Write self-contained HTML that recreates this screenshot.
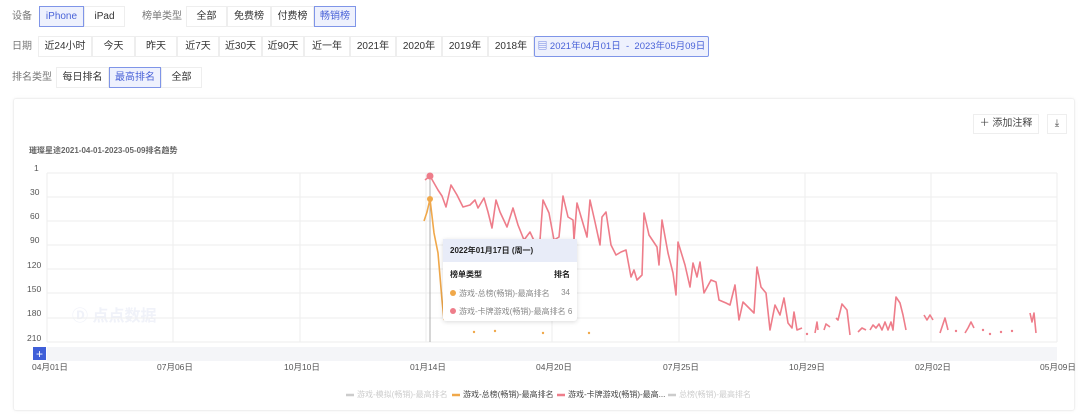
<!DOCTYPE html>
<html><head><meta charset="utf-8"><style>
*{margin:0;padding:0;box-sizing:border-box}
body{width:1080px;height:416px;background:#fff;font-family:"Liberation Sans","Noto Sans CJK SC",sans-serif;font-size:10px;color:#333;position:relative;overflow:hidden}
.l{position:absolute;color:#777;font-size:10px;line-height:12px}
.b{position:absolute;height:21px;border:1px solid #eee;background:#fff;text-align:center;line-height:19px;font-size:10px;color:#333;white-space:nowrap;overflow:hidden}
.a{border-color:#7f95e8;background:#eef1fd;color:#4a63d8;z-index:2}
.ax{position:absolute;font-size:8.5px;color:#555;line-height:10px;white-space:nowrap}
</style></head><body>
<div class="l" style="left:12px;top:11px">设备</div>
<div class="b a" style="left:39px;top:6px;width:45px">iPhone</div>
<div class="b" style="left:84px;top:6px;width:41px">iPad</div>
<div class="l" style="left:142px;top:11px">榜单类型</div>
<div class="b" style="left:186px;top:6px;width:41px">全部</div>
<div class="b" style="left:227px;top:6px;width:44px">免费榜</div>
<div class="b" style="left:271px;top:6px;width:43px">付费榜</div>
<div class="b a" style="left:314px;top:6px;width:42px">畅销榜</div>

<div class="l" style="left:12px;top:41px">日期</div>
<div class="b" style="left:38px;top:36px;width:54px">近24小时</div>
<div class="b" style="left:92px;top:36px;width:43px">今天</div>
<div class="b" style="left:135px;top:36px;width:42px">昨天</div>
<div class="b" style="left:177px;top:36px;width:42px">近7天</div>
<div class="b" style="left:219px;top:36px;width:43px">近30天</div>
<div class="b" style="left:262px;top:36px;width:42px">近90天</div>
<div class="b" style="left:304px;top:36px;width:46px">近一年</div>
<div class="b" style="left:350px;top:36px;width:46px">2021年</div>
<div class="b" style="left:396px;top:36px;width:46px">2020年</div>
<div class="b" style="left:442px;top:36px;width:46px">2019年</div>
<div class="b" style="left:488px;top:36px;width:46px">2018年</div>
<div class="b a" style="left:534px;top:36px;width:175px;border-radius:2px;font-size:9.5px">&#9636; 2021年04月01日 &nbsp;- &nbsp;2023年05月09日</div>

<div class="l" style="left:12px;top:72px">排名类型</div>
<div class="b" style="left:56px;top:67px;width:53px">每日排名</div>
<div class="b a" style="left:109px;top:67px;width:52px">最高排名</div>
<div class="b" style="left:161px;top:67px;width:41px">全部</div>

<div style="position:absolute;left:13px;top:98px;width:1062px;height:313px;border:1px solid #f0f0f0;border-radius:3px;box-shadow:0 0 3px rgba(0,0,0,.05)"></div>
<div class="b" style="left:973px;top:114px;width:66px;height:20px;line-height:18px;color:#444">＋ 添加注释</div>
<div class="b" style="left:1047px;top:114px;width:20px;height:20px;line-height:18px;color:#444">⤓</div>
<div style="position:absolute;left:29px;top:145px;font-size:8px;color:#666;font-weight:bold">璀璨星途2021-04-01-2023-05-09排名趋势</div>

<div class="ax" style="left:34px;top:163px">1</div>
<div class="ax" style="left:30px;top:187px">30</div>
<div class="ax" style="left:30px;top:211px">60</div>
<div class="ax" style="left:30px;top:235px">90</div>
<div class="ax" style="left:27px;top:260px">120</div>
<div class="ax" style="left:27px;top:284px">150</div>
<div class="ax" style="left:27px;top:308px">180</div>
<div class="ax" style="left:27px;top:333px">210</div>

<div style="position:absolute;left:72px;top:302px;font-size:16px;font-weight:bold;color:#f0f2f9">Ⓓ 点点数据</div>

<svg style="position:absolute;left:0;top:0" width="1080" height="416">
<g stroke="#eeeeee" stroke-width="1">
<line x1="47" y1="173" x2="1057" y2="173"/><line x1="47" y1="197" x2="1057" y2="197"/>
<line x1="47" y1="221" x2="1057" y2="221"/><line x1="47" y1="245" x2="1057" y2="245"/>
<line x1="47" y1="269" x2="1057" y2="269"/><line x1="47" y1="293" x2="1057" y2="293"/>
<line x1="47" y1="318" x2="1057" y2="318"/><line x1="47" y1="342" x2="1057" y2="342"/>
<line x1="47" y1="173" x2="47" y2="342"/><line x1="173" y1="173" x2="173" y2="342"/>
<line x1="300" y1="173" x2="300" y2="342"/><line x1="426" y1="173" x2="426" y2="342"/>
<line x1="552" y1="173" x2="552" y2="342"/><line x1="679" y1="173" x2="679" y2="342"/>
<line x1="805" y1="173" x2="805" y2="342"/><line x1="931" y1="173" x2="931" y2="342"/>
<line x1="1057" y1="173" x2="1057" y2="342"/>
</g>
<rect x="47" y="347" width="1010" height="14" fill="#f4f5f8"/>
<rect x="33" y="347" width="13" height="13" fill="#3f5fd8"/>
<text x="39.5" y="358" fill="#fff" font-size="12" text-anchor="middle" font-family="Liberation Sans">+</text>
<line x1="430" y1="176" x2="430" y2="342" stroke="#999" stroke-width="0.8"/>
<g fill="none" stroke="#ee7d8a" stroke-width="1.6" stroke-linejoin="round">
<polyline points="425,180 430,176 438,190 442,196 446,207 451,185 457,195 463,207 470,205 475,200 478,208 484,198 488,212 492,228 496,200 500,212 507,227 513,208 518,225 524,240 530,232 536,245 540,240 543,200 549,213 554,240 559,237 563,196 568,217 573,220 574,240 577,203 582,220 587,237 590,200 595,222 600,245 602,217 606,212 611,245 616,255 621,252 626,250 631,277 634,270 637,280 642,275 644,213 649,235 657,247 659,265 662,220 668,253 673,273 676,295 678,242 685,265 690,287 693,263 697,277 700,262 704,293 711,280 716,282 719,300 726,303 730,305 735,285 739,320 743,302 749,308 754,313 757,267 761,287 766,293 770,330 775,305 780,315 784,298 788,323 792,328 794,312 797,330 802,328"/>
<polyline points="815,333 817,322 818,330"/>
<polyline points="824,330 826,324 830,327"/>
<polyline points="836,318 838,320 842,304 847,310 850,335"/>
<polyline points="858,332 862,328 866,330"/>
<polyline points="870,330 873,325 876,328 879,324 882,330 885,322 888,330 891,322 893,330 896,297 900,303 903,315 906,330"/>
<polyline points="924,315 927,320 930,315 933,320"/>
<polyline points="940,333 945,318 948,330"/>
<polyline points="965,333 968,328 971,322 974,328"/>
<polyline points="1030,313 1032,322 1034,313 1036,333"/>
</g>
<g fill="#ee7d8a"><circle cx="807" cy="334" r="1.2"/><circle cx="956" cy="331" r="1.2"/><circle cx="983" cy="330" r="1.2"/><circle cx="990" cy="334" r="1.2"/><circle cx="1001" cy="332" r="1.2"/><circle cx="1012" cy="331" r="1.2"/></g>
<g fill="none" stroke="#f0a84a" stroke-width="1.6"><polyline points="424,221 427,212 430,199 434,233 438,253 442,300 444,320"/></g>
<g fill="#f0a84a"><circle cx="474" cy="332" r="1.2"/><circle cx="495" cy="331" r="1.2"/><circle cx="543" cy="333" r="1.2"/><circle cx="589" cy="333" r="1.2"/></g>
<circle cx="430" cy="176" r="3.5" fill="#ee7d8a"/>
<circle cx="430" cy="199" r="3" fill="#f0a84a"/>
<g stroke-width="2.5"><line x1="346" y1="395" x2="354" y2="395" stroke="#ccc"/><line x1="452" y1="395" x2="460" y2="395" stroke="#f0a84a"/><line x1="557" y1="395" x2="565" y2="395" stroke="#ee7d8a"/><line x1="668" y1="395" x2="676" y2="395" stroke="#ccc"/></g>
</svg>

<div class="ax" style="left:32px;top:362px">04月01日</div>
<div class="ax" style="left:157px;top:362px">07月06日</div>
<div class="ax" style="left:284px;top:362px">10月10日</div>
<div class="ax" style="left:410px;top:362px">01月14日</div>
<div class="ax" style="left:536px;top:362px">04月20日</div>
<div class="ax" style="left:663px;top:362px">07月25日</div>
<div class="ax" style="left:789px;top:362px">10月29日</div>
<div class="ax" style="left:915px;top:362px">02月02日</div>
<div class="ax" style="left:1040px;top:362px">05月09日</div>

<div class="ax" style="left:357px;top:390px;color:#ccc;font-size:8px">游戏-模拟(畅销)-最高排名</div>
<div class="ax" style="left:463px;top:390px;color:#444;font-size:8px">游戏-总榜(畅销)-最高排名</div>
<div class="ax" style="left:568px;top:390px;color:#444;font-size:8px">游戏-卡牌游戏(畅销)-最高...</div>
<div class="ax" style="left:679px;top:390px;color:#ccc;font-size:8px">总榜(畅销)-最高排名</div>

<div style="position:absolute;left:443px;top:239px;width:134px;height:82px;background:#fff;box-shadow:0 1px 5px rgba(0,0,0,.15);border-radius:3px;font-size:8px">
<div style="height:23px;background:#e8ecf8;line-height:23px;padding-left:7px;font-weight:bold;color:#222">2022年01月17日 (周一)</div>
<div style="position:absolute;left:7px;top:30px;font-weight:bold;color:#222">榜单类型</div>
<div style="position:absolute;right:7px;top:30px;font-weight:bold;color:#222">排名</div>
<div style="position:absolute;left:7px;top:49px;color:#888"><span style="display:inline-block;width:6px;height:6px;border-radius:50%;background:#f0a84a;margin-right:3px"></span>游戏-总榜(畅销)-最高排名</div>
<div style="position:absolute;right:7px;top:49px;color:#888">34</div>
<div style="position:absolute;left:7px;top:67px;color:#888;white-space:nowrap"><span style="display:inline-block;width:6px;height:6px;border-radius:50%;background:#ee7d8a;margin-right:3px"></span>游戏-卡牌游戏(畅销)-最高排名 6</div>
</div>
</body></html>
